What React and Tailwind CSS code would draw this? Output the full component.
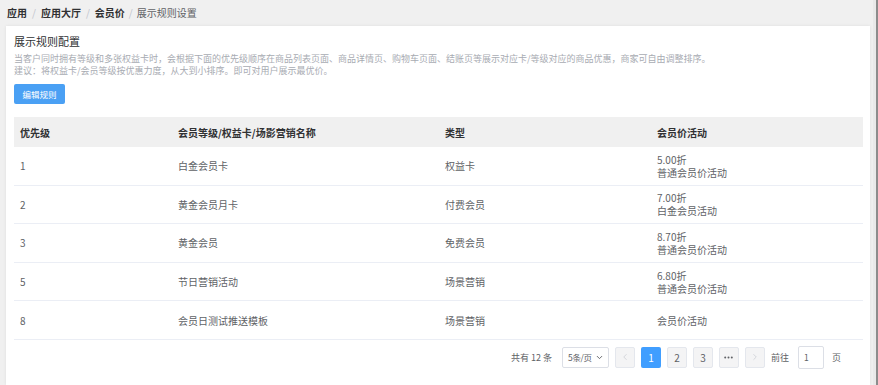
import React from 'react';
import { ChevronDown, ChevronLeft, ChevronRight } from 'lucide-react';

const rows = [
    { level: '1', name: '白金会员卡', type: '权益卡', price: '5.00折', activity: '普通会员价活动' },
    { level: '2', name: '黄金会员月卡', type: '付费会员', price: '7.00折', activity: '白金会员活动' },
    { level: '3', name: '黄金会员', type: '免费会员', price: '8.70折', activity: '普通会员价活动' },
    { level: '5', name: '节日营销活动', type: '场景营销', price: '6.80折', activity: '普通会员价活动' },
    { level: '8', name: '会员日测试推送模板', type: '场景营销', price: null, activity: '会员价活动' },
];

// Breadcrumb at the top of the page
function Breadcrumb() {
    return (
        <nav className="h-[26px] flex items-center pl-[7px] text-[10px] leading-none">
            <span className="font-bold text-[#303133]">应用</span>
            <span className="mx-[5px] text-[#c0c4cc]">/</span>
            <span className="font-bold text-[#303133]">应用大厅</span>
            <span className="mx-[5px] text-[#c0c4cc]">/</span>
            <span className="font-bold text-[#303133]">会员价</span>
            <span className="mx-[4px] text-[#c0c4cc]">/</span>
            <span className="text-[#606266]">展示规则设置</span>
        </nav>
    );
}

function PageButton({ children, active }) {
    return (
        <div
            className={
                active
                    ? 'w-[20px] h-[21px] flex items-center justify-center rounded-[2px] bg-[#409eff] text-white text-[10px]'
                    : 'w-[20px] h-[21px] flex items-center justify-center rounded-[2px] bg-[#f4f4f5] border border-[#e4e7ed] text-[#606266] text-[10px]'
            }
        >
            {children}
        </div>
    );
}

function Pagination() {
    return (
        <div className="flex justify-end items-center pr-[22px] pt-[6px] text-[9px] text-[#606266] whitespace-nowrap">
            <span>共有 12 条</span>
            <div className="ml-[10px] w-[47px] h-[21px] flex items-center justify-between pl-[5px] pr-[4px] border border-[#dcdfe6] rounded-[2px] bg-white">
                <span className="text-[8.5px] tracking-[-0.3px]">5条/页</span>
                <ChevronDown size={9} strokeWidth={2.5} className="text-[#606266]" />
            </div>
            <div className="ml-[6px] flex gap-[6px]">
                <PageButton><ChevronLeft size={10} strokeWidth={1.5} className="text-[#c0c4cc]" /></PageButton>
                <PageButton active>1</PageButton>
                <PageButton>2</PageButton>
                <PageButton>3</PageButton>
                <PageButton>
                    <svg width="9" height="3" viewBox="0 0 9 3" className="fill-[#606266]">
                        <circle cx="1.2" cy="1.5" r="1" />
                        <circle cx="4.5" cy="1.5" r="1" />
                        <circle cx="7.8" cy="1.5" r="1" />
                    </svg>
                </PageButton>
                <PageButton><ChevronRight size={10} strokeWidth={1.5} className="text-[#c0c4cc]" /></PageButton>
            </div>
            <span className="ml-[6px]">前往</span>
            <div className="ml-[9px] w-[26px] h-[23px] flex items-center pl-[5px] border border-[#dcdfe6] rounded-[2px] bg-white text-[8.5px]">1</div>
            <span className="ml-[8px]">页</span>
        </div>
    );
}

export default function App() {
    return (
        <div className="flex w-[878px] h-[385px] overflow-hidden bg-[#f0f0f0] font-['Noto_Sans_CJK_SC',sans-serif]">
            <div className="flex-1 flex flex-col">
                <Breadcrumb />
                <div className="ml-[6px] mr-[3px] flex-1 bg-white shadow-[0_0_3px_rgba(0,0,0,0.08)] pl-[8px] pr-[7px] pt-[8px]">
                    <h2 className="text-[11px] leading-[15px] text-[#303133]">展示规则配置</h2>
                    <div className="mt-[4px] text-[9px] leading-[12px] text-[#a8abb2]">
                        <p>当客户同时拥有等级和多张权益卡时，会根据下面的优先级顺序在商品列表页面、商品详情页、购物车页面、结账页等展示对应卡/等级对应的商品优惠，商家可自由调整排序。</p>
                        <p>建议：将权益卡/会员等级按优惠力度，从大到小排序。即可对用户展示最优价。</p>
                    </div>
                    <button className="mt-[7px] w-[51px] h-[20px] rounded-[2px] bg-[#4aa0f4] text-white text-[8.5px]">编辑规则</button>

                    {/* table */}
                    <div className="mt-[13px] text-[10px]">
                        <div className="grid grid-cols-[158px_267px_212px_1fr] h-[30px] items-center bg-[#f0f0f0] font-bold text-[#303133]">
                            <div className="pl-[6px]">优先级</div>
                            <div className="pl-[6px]">会员等级/权益卡/场影营销名称</div>
                            <div className="pl-[6px]">类型</div>
                            <div className="pl-[6px]">会员价活动</div>
                        </div>
                        {rows.map((r) => (
                            <div key={r.level} className="grid grid-cols-[158px_267px_212px_1fr] h-[38.6px] items-center border-b border-[#ebeef5] text-[#606266]">
                                <div className="pl-[6px]">{r.level}</div>
                                <div className="pl-[6px]">{r.name}</div>
                                <div className="pl-[6px]">{r.type}</div>
                                <div className="pl-[6px] leading-[13px]">
                                    {r.price && <div>{r.price}</div>}
                                    <div>{r.activity}</div>
                                </div>
                            </div>
                        ))}
                    </div>
                    <Pagination />
                </div>
            </div>
            {/* scrollbar strip */}
            <div className="w-[3px] bg-[#e9e9e9]" />
            <div className="w-[2px] bg-[#8c8c8c]" />
        </div>
    );
}
